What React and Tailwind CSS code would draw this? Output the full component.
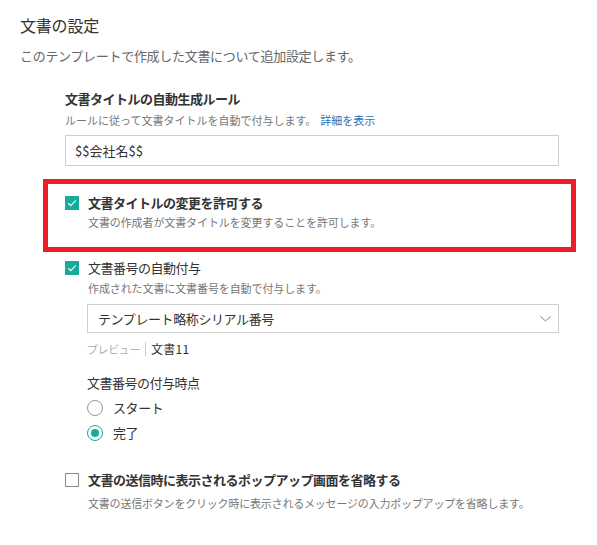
import React, { useState } from "react";

const font = { fontFamily: '"Noto Sans CJK JP", "Noto Sans", sans-serif' };

const CheckBox = ({ checked, onChange }) => (
  <button
    type="button"
    onClick={onChange}
    className={`w-[14px] h-[14px] shrink-0 flex items-center justify-center ${
      checked ? "bg-[#1aaa9c]" : "bg-white border border-[#8a8a8a]"
    }`}
  >
    {checked && (
      <svg width="10" height="8" viewBox="0 0 10 8" fill="none">
        <path d="M1.2 4.2 L3.8 6.6 L8.8 1.4" stroke="#dff5f2" strokeWidth="1.3" />
      </svg>
    )}
  </button>
);

const Radio = ({ checked, label, onClick }) => (
  <button type="button" onClick={onClick} className="flex items-center h-[20px]">
    <span
      className={`w-[16px] h-[16px] rounded-full flex items-center justify-center border-[1.5px] ${
        checked ? "border-[#1aaa9c]" : "border-[#999]"
      }`}
    >
      {checked && <span className="w-[8px] h-[8px] rounded-full bg-[#1aaa9c]" />}
    </span>
    <span className="ml-[10px] text-[13px] leading-[18px] tracking-[-0.4px] text-[#333]">
      {label}
    </span>
  </button>
);

export default function App() {
  const [allowTitle, setAllowTitle] = useState(true);
  const [autoNumber, setAutoNumber] = useState(true);
  const [skipPopup, setSkipPopup] = useState(false);
  const [timing, setTiming] = useState("done");

  return (
    <div className="bg-white w-[597px] h-[545px] px-5 pt-[15px] text-[#333]" style={font}>
      <h1 className="text-[16px] leading-[20px] tracking-[-0.2px] font-normal">文書の設定</h1>
      <p className="mt-[11px] text-[13px] leading-[20px] tracking-[-0.3px] text-[#666]">
        このテンプレートで作成した文書について追加設定します。
      </p>

      <div className="pl-[45px] pr-[18px]">
        {/* title rule */}
        <div className="mt-[24px] text-[13px] leading-[18px] tracking-[-0.5px] font-semibold">
          文書タイトルの自動生成ルール
        </div>
        <div className="mt-[4px] text-[11px] leading-[16px] text-[#777]">
          ルールに従って文書タイトルを自動で付与します。
          <a href="#" className="ml-[4px] text-[#2a74b8]">
            詳細を表示
          </a>
        </div>
        <input
          defaultValue="$$会社名$$"
          className="mt-[7px] block w-full h-[31px] border border-[#cfcfcf] px-[9px] text-[13px] text-[#333] outline-none"
          style={font}
        />

        {/* highlighted */}
        <div className="mt-[13px] ml-[-22px] mr-[-17px] border-[5px] border-[#ee1c25] pl-[17px] pt-[10px] pb-[17px]">
          <div className="flex items-center h-[18px]">
            <CheckBox checked={allowTitle} onChange={() => setAllowTitle(!allowTitle)} />
            <span className="ml-[9px] text-[13px] leading-[18px] tracking-[-0.5px] font-semibold">
              文書タイトルの変更を許可する
            </span>
          </div>
          <div className="mt-[2px] pl-[23px] text-[11px] leading-[16px] tracking-[-0.1px] text-[#777]">
            文書の作成者が文書タイトルを変更することを許可します。
          </div>
        </div>

        {/* numbering */}
        <div className="mt-[7px] flex items-center h-[18px]">
          <CheckBox checked={autoNumber} onChange={() => setAutoNumber(!autoNumber)} />
          <span className="ml-[9px] text-[13px] leading-[18px] tracking-[-0.5px]">文書番号の自動付与</span>
        </div>
        <div className="pl-[22px]">
          <div className="mt-[3px] pl-[1px] text-[11px] leading-[16px] tracking-[-0.1px] text-[#777]">
            作成された文書に文書番号を自動で付与します。
          </div>
          <div className="mt-[8px] h-[29px] border border-[#cfcfcf] flex items-center justify-between pl-[10px] pr-[7px]">
            <span className="text-[13px] tracking-[-0.4px] text-[#333]">テンプレート略称シリアル番号</span>
            <svg width="11" height="6" viewBox="0 0 11 6" fill="none">
              <path d="M0.5 0.5 L5.5 5 L10.5 0.5" stroke="#888" strokeWidth="1" />
            </svg>
          </div>
          <div className="mt-[8px] flex items-center h-[16px]">
            <span className="text-[11px] leading-[16px] tracking-[-0.4px] text-[#b0b0b0]">プレビュー</span>
            <span className="mx-[5px] w-px h-[14px] bg-[#ccc]" />
            <span className="text-[12px] leading-[16px] tracking-[0.3px] text-[#333]">文書11</span>
          </div>

          <div className="mt-[17px] text-[13px] leading-[18px] tracking-[-0.5px]">文書番号の付与時点</div>
          <div className="mt-[6px]">
            <Radio label="スタート" checked={timing === "start"} onClick={() => setTiming("start")} />
          </div>
          <div className="mt-[5px]">
            <Radio label="完了" checked={timing === "done"} onClick={() => setTiming("done")} />
          </div>
        </div>

        {/* popup */}
        <div className="mt-[28px] flex items-center h-[18px]">
          <CheckBox checked={skipPopup} onChange={() => setSkipPopup(!skipPopup)} />
          <span className="ml-[9px] text-[13px] leading-[18px] tracking-[-0.5px] font-semibold">
            文書の送信時に表示されるポップアップ画面を省略する
          </span>
        </div>
        <div className="mt-[6px] pl-[23px] text-[11px] leading-[16px] tracking-[-0.2px] text-[#777] whitespace-nowrap">
          文書の送信ボタンをクリック時に表示されるメッセージの入力ポップアップを省略します。
        </div>
      </div>
    </div>
  );
}
